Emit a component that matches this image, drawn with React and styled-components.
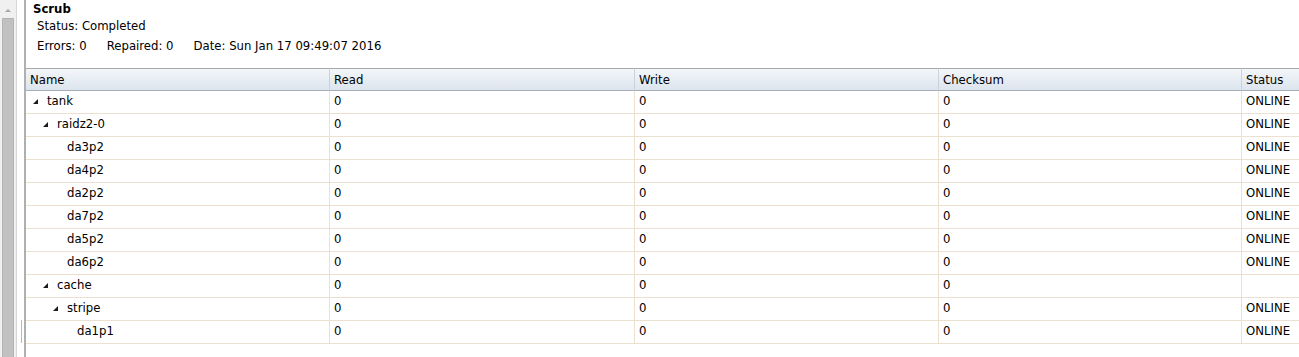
import React from "react";
import styled, { createGlobalStyle } from "styled-components";

const GlobalStyle = createGlobalStyle`
  html, body {
    margin: 0;
    padding: 0;
    background: #ffffff;
    overflow: hidden;
  }
  body {
    font-family: "DejaVu Sans", Verdana, sans-serif;
    font-size: 11.7px;
    color: #000000;
  }
`;

const Page = styled.div`
  display: flex;
  width: 1299px;
  height: 357px;
  overflow: hidden;
`;

const ScrollTrack = styled.div`
  width: 17px;
  flex: none;
  background: #f0f0f0;
  border-right: 1px solid #d6d6d6;
  box-sizing: border-box;
  display: flex;
  flex-direction: column;
  align-items: center;
`;

const ArrowUp = styled.div`
  width: 0;
  height: 0;
  margin-top: 9px;
  border-left: 3px solid transparent;
  border-right: 3px solid transparent;
  border-bottom: 3px solid #a6a6a6;
`;

const Thumb = styled.div`
  margin-top: 6px;
  width: 12px;
  flex: 1;
  background: #c1c1c1;
  border: 1px solid #b4b4b4;
  border-bottom: none;
  box-sizing: border-box;
`;

const Splitter = styled.div`
  width: 7px;
  flex: none;
  background: #ffffff;
  border-right: 2px solid #b0b0b0;
  display: flex;
  align-items: flex-end;
  justify-content: flex-end;
  padding-bottom: 14px;
`;

const Grip = styled.div`
  width: 1px;
  height: 23px;
  margin-right: 2px;
  background: #b8b8b8;
`;

const Main = styled.div`
  flex: 1;
  min-width: 0;
  overflow: hidden;
`;

const Summary = styled.div`
  padding: 2px 0 0 7px;
  height: 68px;
  box-sizing: border-box;
`;

const Title = styled.div`
  font-weight: bold;
  line-height: 14px;
`;

const Line = styled.div`
  padding-left: 4px;
  line-height: 14px;
  margin-top: ${(p) => p.$gap || 3}px;
  display: flex;
  gap: 20px;
`;

const Grid = styled.div`
  display: grid;
  grid-template-columns: 304px 305px 304px 303px 140px;
  width: max-content;
`;

const HeadCell = styled.div`
  height: 21px;
  line-height: 21px;
  padding: 1px 0 0 4px;
  box-sizing: border-box;
  border-top: 1px solid #a9a9a9;
  border-bottom: 1px solid #a5aeb8;
  border-right: 1px solid #c9d1da;
  background: linear-gradient(#f3f6f9, #dce4ed);
  white-space: nowrap;
  height: 23px;
`;

const Cell = styled.div`
  height: 22px;
  line-height: 20px;
  padding-left: ${(p) => (p.$indent != null ? p.$indent : 4)}px;
  padding-bottom: 2px;
  box-sizing: content-box;
  border-bottom: 1px solid #eee0d1;
  border-right: 1px solid #eee0d1;
  white-space: nowrap;
  display: flex;
  align-items: center;
  height: 20px;
`;

const Expander = styled.span`
  display: inline-block;
  width: 14px;
  height: 20px;
  flex: none;
  position: relative;
`;

const Tri = styled.svg`
  position: absolute;
  left: 0;
  top: 8px;
`;

const columns = ["Name", "Read", "Write", "Checksum", "Status"];

const rows = [
  { name: "tank", level: 0, tree: true, status: "ONLINE" },
  { name: "raidz2-0", level: 1, tree: true, status: "ONLINE" },
  { name: "da3p2", level: 2, status: "ONLINE" },
  { name: "da4p2", level: 2, status: "ONLINE" },
  { name: "da2p2", level: 2, status: "ONLINE" },
  { name: "da7p2", level: 2, status: "ONLINE" },
  { name: "da5p2", level: 2, status: "ONLINE" },
  { name: "da6p2", level: 2, status: "ONLINE" },
  { name: "cache", level: 1, tree: true, status: "" },
  { name: "stripe", level: 2, tree: true, status: "ONLINE" },
  { name: "da1p1", level: 3, status: "ONLINE" },
];

function NameCell({ row }) {
  return (
    <Cell $indent={7 + row.level * 10}>
      <Expander>
        {row.tree && (
          <Tri width="5" height="5" viewBox="0 0 5 5">
            <polygon points="5,0 5,5 0,5" fill="#1a1a1a" />
          </Tri>
        )}
      </Expander>
      {row.name}
    </Cell>
  );
}

export default function App() {
  return (
    <>
      <GlobalStyle />
      <Page>
        <ScrollTrack>
          <ArrowUp />
          <Thumb />
        </ScrollTrack>
        <Splitter>
          <Grip />
        </Splitter>
        <Main>
          <Summary>
            <Title>Scrub</Title>
            <Line $gap={3}>Status: Completed</Line>
            <Line $gap={6}>
              <span>Errors: 0</span>
              <span>Repaired: 0</span>
              <span>Date: Sun Jan 17 09:49:07 2016</span>
            </Line>
          </Summary>
          <Grid>
            {columns.map((c) => (
              <HeadCell key={c}>{c}</HeadCell>
            ))}
            {rows.map((r) => (
              <React.Fragment key={r.name}>
                <NameCell row={r} />
                <Cell>0</Cell>
                <Cell>0</Cell>
                <Cell>0</Cell>
                <Cell>{r.status}</Cell>
              </React.Fragment>
            ))}
          </Grid>
        </Main>
      </Page>
    </>
  );
}
